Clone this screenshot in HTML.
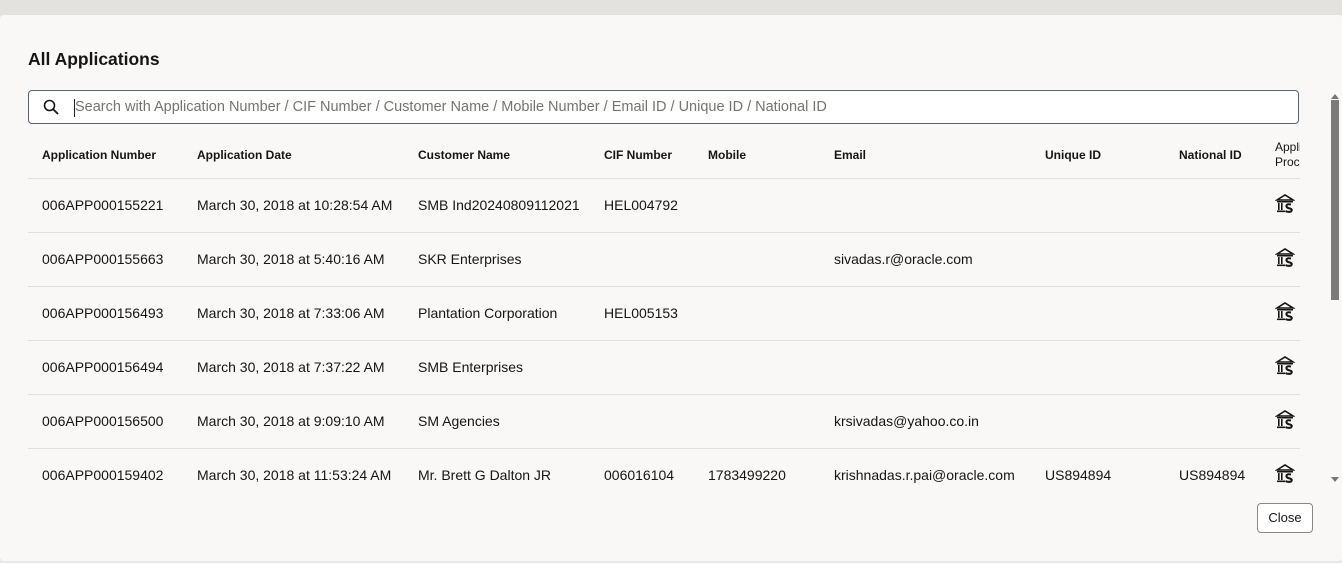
<!DOCTYPE html>
<html><head><style>
body{margin:0;width:1342px;height:563px;overflow:hidden;background:#e9e7e4;font-family:"Liberation Sans",sans-serif;color:#161513;position:relative}
.top{position:absolute;left:0;top:0;width:1342px;height:15px;background:#e4e2df}
.dlg{position:absolute;left:0;top:15px;width:1342px;height:546px;background:#f9f8f6;border-radius:4px}
h1{position:absolute;left:28px;top:34px;margin:0;font-size:17.5px;font-weight:bold}
.search{position:absolute;left:28px;top:75px;width:1269px;height:32px;border:1.5px solid #58627a;border-radius:4px;background:#fff}
.search span{position:absolute;left:46px;top:8px;font-size:14.5px;color:#77736e}
.search .cur{position:absolute;left:45px;top:8px;width:1px;height:18px;background:#222}
.t{position:absolute;font-size:14px;white-space:nowrap}
.h{position:absolute;font-size:12px;font-weight:bold;white-space:nowrap;top:133px}
.ln{position:absolute;left:28px;width:1272px;height:1px;background:#e2e0dd}
.sb{position:absolute;left:1331px;top:85px;width:8px;height:200px;background:#7b7b7b}
.close{position:absolute;left:1257px;top:488px;width:56px;height:30px;border:1px solid #8a8782;border-radius:4px;background:#fff;font-size:13px;text-align:center;line-height:28px;box-sizing:border-box}
</style></head><body>
<div class="top"></div>
<div class="dlg">
<h1>All Applications</h1>
<div class="search"><svg style="position:absolute;left:14px;top:8px" width="16" height="16" viewBox="0 0 16 16"><circle cx="6.5" cy="6.5" r="5" fill="none" stroke="#161513" stroke-width="1.6"/><line x1="10.2" y1="10.2" x2="15" y2="15" stroke="#161513" stroke-width="1.8"/></svg><div class="cur"></div><span>Search with Application Number / CIF Number / Customer Name / Mobile Number / Email ID / Unique ID / National ID</span></div>
<div class="h" style="left:42px">Application Number</div>
<div class="h" style="left:197px">Application Date</div>
<div class="h" style="left:418px">Customer Name</div>
<div class="h" style="left:604px">CIF Number</div>
<div class="h" style="left:708px">Mobile</div>
<div class="h" style="left:834px">Email</div>
<div class="h" style="left:1045px">Unique ID</div>
<div class="h" style="left:1179px">National ID</div>
<div class="h" style="left:1275px;top:125px;width:25px;overflow:hidden;font-weight:normal;line-height:15px">Application<br>Process</div>
<div class="sb"></div>
<svg style="position:absolute;left:1330px;top:78px" width="10" height="6"><path d="M1 6L5 1L9 6Z" fill="#777"/></svg>
<svg style="position:absolute;left:1330px;top:462px" width="10" height="6"><path d="M1 0L5 5L9 0Z" fill="#777"/></svg>
<div class="close">Close</div>
</div>
<div id="rows"></div>
<script>
var d=[["006APP000155221","March 30, 2018 at 10:28:54 AM","SMB Ind20240809112021","HEL004792","","","",""],
["006APP000155663","March 30, 2018 at 5:40:16 AM","SKR Enterprises","","","sivadas.r@oracle.com","",""],
["006APP000156493","March 30, 2018 at 7:33:06 AM","Plantation Corporation","HEL005153","","","",""],
["006APP000156494","March 30, 2018 at 7:37:22 AM","SMB Enterprises","","","","",""],
["006APP000156500","March 30, 2018 at 9:09:10 AM","SM Agencies","","","krsivadas@yahoo.co.in","",""],
["006APP000159402","March 30, 2018 at 11:53:24 AM","Mr. Brett G Dalton JR","006016104","1783499220","krishnadas.r.pai@oracle.com","US894894","US894894"]];
var xs=[42,197,418,604,708,834,1045,1179],h="";
var ic='<svg width="20" height="20" viewBox="0 0 20 20"><path d="M2 6L10 1L18 6Z" fill="none" stroke="#161513" stroke-width="1.6"/><rect x="2" y="7" width="16" height="1.5" fill="#161513"/><rect x="3" y="9" width="1.6" height="7" fill="#161513"/><rect x="6" y="9" width="1.6" height="7" fill="#161513"/><rect x="2" y="16.5" width="8" height="1.6" fill="#161513"/><path d="M16 10.5Q11 9.5 11.5 12.5Q12 14 15 14.5Q18 15.5 16 17.5Q13 18.5 10.5 17" fill="none" stroke="#161513" stroke-width="2"/></svg>';
for(var i=0;i<6;i++){var y=178+i*54;h+='<div class="ln" style="top:'+y+'px"></div>';
for(var j=0;j<8;j++)if(d[i][j])h+='<div class="t" style="left:'+xs[j]+'px;top:'+(y+19)+'px">'+d[i][j]+'</div>';
h+='<div style="position:absolute;left:1275px;top:'+(y+16)+'px">'+ic+'</div>';}
document.getElementById('rows').innerHTML=h;
</script>
</body></html>
